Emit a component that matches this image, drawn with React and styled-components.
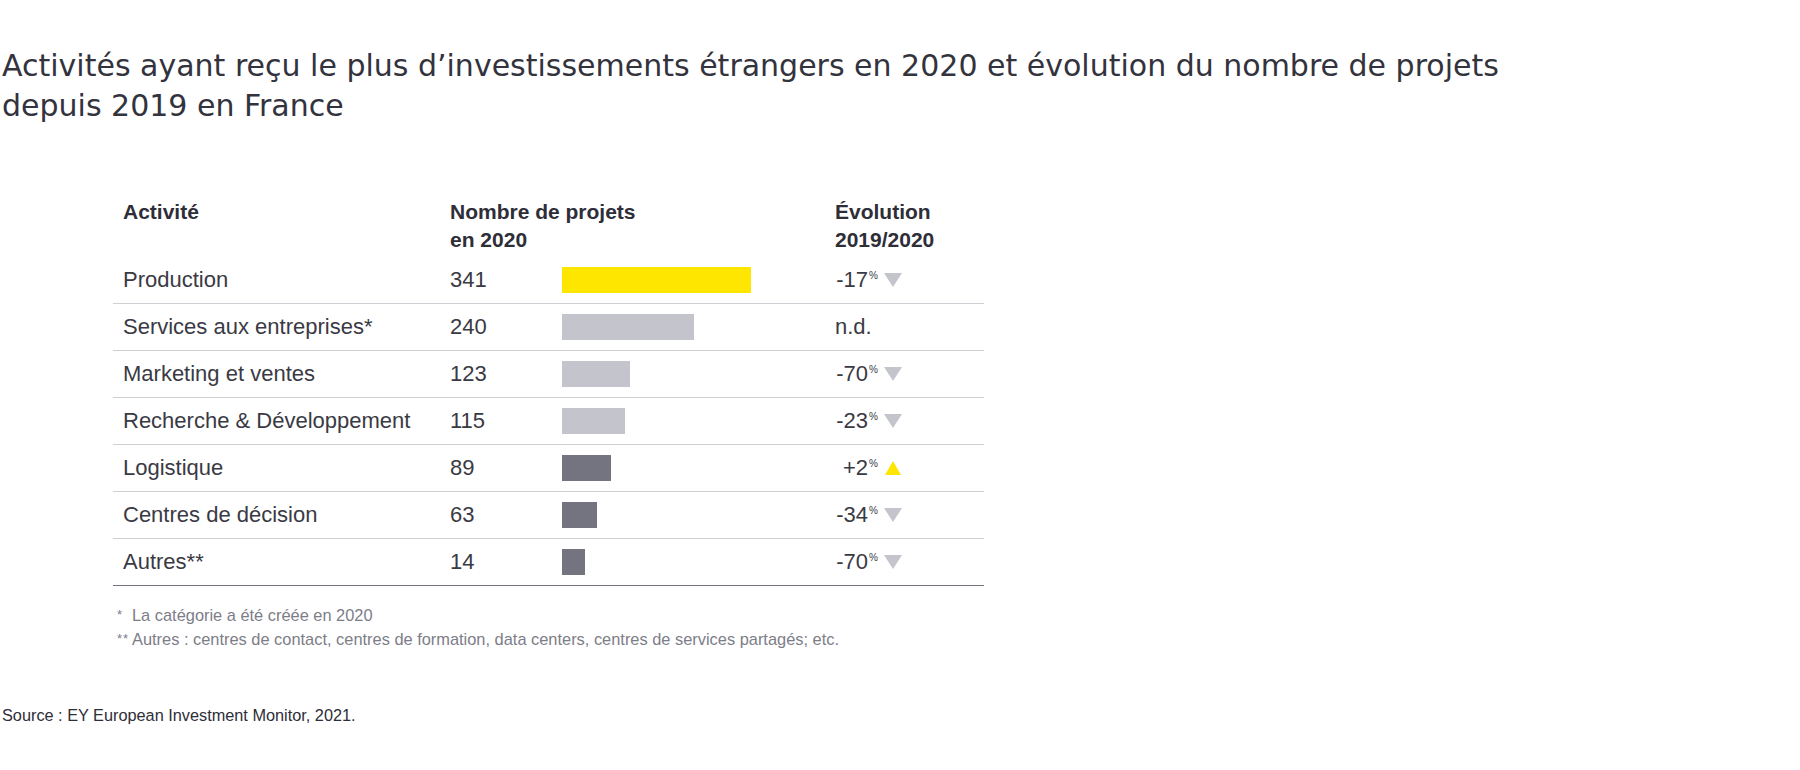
import React from 'react';
import styled, { createGlobalStyle } from 'styled-components';

const GlobalStyle = createGlobalStyle`
  html, body {
    margin: 0;
    padding: 0;
    background: #ffffff;
  }
  body {
    font-family: "Liberation Sans", Arial, sans-serif;
    color: #2e2e38;
  }
`;

const Page = styled.div`
  width: 1800px;
  height: 770px;
  padding-top: 46px;
  box-sizing: border-box;
`;

const Title = styled.h1`
  margin: 0 0 0 2px;
  font-family: "DejaVu Sans", "Liberation Sans", sans-serif;
  font-weight: 400;
  font-size: 30px;
  line-height: 40px;
  color: #33333d;
`;

const Table = styled.div`
  margin: 72px 0 0 113px;
  width: 871px;
  border-bottom: 1px solid #747480;
`;

const Grid = styled.div`
  display: grid;
  grid-template-columns: 327px 112px 273px 1fr;
  align-items: center;
  padding-left: 10px;
`;

const HeadRow = styled(Grid)`
  align-items: start;
  padding-bottom: 3px;
`;

const HeadCell = styled.div`
  font-weight: 700;
  font-size: 21px;
  line-height: 28px;
  color: #2e2e38;
  grid-column: ${({ $span }) => ($span ? `span ${$span}` : 'auto')};
`;

const Row = styled(Grid)`
  height: 46px;
  border-top: ${({ $first }) => ($first ? 'none' : '1px solid #cfcfd6')};
  font-size: 22px;
  color: #3a3a44;
`;

const Cell = styled.div`
  white-space: nowrap;
`;

const Bar = styled.div`
  height: 26px;
  width: ${({ $w }) => $w}px;
  background: ${({ $tone }) =>
    $tone === 'yellow' ? '#ffe600' : $tone === 'light' ? '#c4c4cd' : '#747480'};
`;

const Change = styled.div`
  display: flex;
  align-items: center;
  gap: 6px;
`;

const ChangeValue = styled.span`
  display: inline-block;
  width: 43px;
  text-align: right;
  white-space: nowrap;
`;

const Pct = styled.sup`
  font-size: 10px;
  line-height: 0;
  vertical-align: 8px;
  margin-left: 1px;
`;

const Notes = styled.div`
  margin: 17px 0 0 117px;
  font-size: 16.4px;
  line-height: 24px;
  color: #7d7d88;
`;

const Note = styled.div`
  display: flex;
  white-space: nowrap;
`;

const Mark = styled.span`
  width: 15px;
  font-size: 13px;
  letter-spacing: 1px;
`;

const Source = styled.div`
  margin: 52px 0 0 2px;
  font-size: 16.3px;
  line-height: 24px;
  color: #2e2e38;
`;

const Triangle = ({ up }) => (
  <svg width="18" height="14" viewBox="0 0 18 14">
    {up ? (
      <polygon points="9,0 17,14 1,14" fill="#ffe600" />
    ) : (
      <polygon points="0,0 18,0 9,14" fill="#c4c4cd" />
    )}
  </svg>
);

const rows = [
  { name: 'Production', count: 341, w: 189, tone: 'yellow', change: '-17', dir: 'down' },
  { name: 'Services aux entreprises*', count: 240, w: 132, tone: 'light', change: null },
  { name: 'Marketing et ventes', count: 123, w: 68, tone: 'light', change: '-70', dir: 'down' },
  { name: 'Recherche & Développement', count: 115, w: 63, tone: 'light', change: '-23', dir: 'down' },
  { name: 'Logistique', count: 89, w: 49, tone: 'dark', change: '+2', dir: 'up' },
  { name: 'Centres de décision', count: 63, w: 35, tone: 'dark', change: '-34', dir: 'down' },
  { name: 'Autres**', count: 14, w: 23, tone: 'dark', change: '-70', dir: 'down' },
];

export default function App() {
  return (
    <>
      <GlobalStyle />
      <Page>
        <Title>
          Activités ayant reçu le plus d’investissements étrangers en 2020 et évolution du nombre de projets
          <br />
          depuis 2019 en France
        </Title>

        <Table>
          <HeadRow>
            <HeadCell>Activité</HeadCell>
            <HeadCell $span={2}>
              Nombre de projets
              <br />
              en 2020
            </HeadCell>
            <HeadCell>
              Évolution
              <br />
              2019/2020
            </HeadCell>
          </HeadRow>
          {rows.map((r, i) => (
            <Row key={r.name} $first={i === 0}>
              <Cell>{r.name}</Cell>
              <Cell>{r.count}</Cell>
              <Cell>
                <Bar $w={r.w} $tone={r.tone} />
              </Cell>
              <Cell>
                {r.change ? (
                  <Change>
                    <ChangeValue>
                      {r.change}
                      <Pct>%</Pct>
                    </ChangeValue>
                    <Triangle up={r.dir === 'up'} />
                  </Change>
                ) : (
                  'n.d.'
                )}
              </Cell>
            </Row>
          ))}
        </Table>

        <Notes>
          <Note>
            <Mark>*</Mark>La catégorie a été créée en 2020
          </Note>
          <Note>
            <Mark>**</Mark>Autres : centres de contact, centres de formation, data centers, centres de services partagés; etc.
          </Note>
        </Notes>

        <Source>Source : EY European Investment Monitor, 2021.</Source>
      </Page>
    </>
  );
}
